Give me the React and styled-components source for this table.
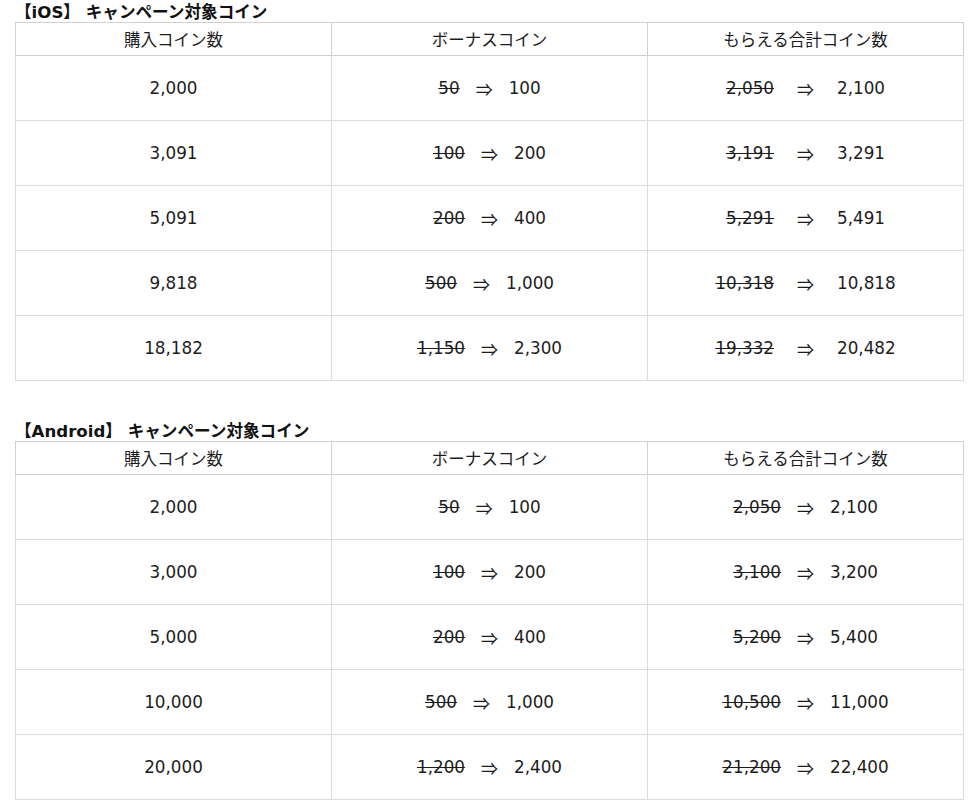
import React from "react";
import styled, { createGlobalStyle } from "styled-components";

const GlobalStyle = createGlobalStyle`
  body {
    margin: 0;
    background: #ffffff;
    font-family: "DejaVu Sans", "Noto Sans CJK JP", sans-serif;
    color: #1c1c1c;
  }
`;

const Page = styled.div`
  width: 949px;
  padding: 0 0 8px 15px;
`;

const Section = styled.section`
  margin-bottom: ${(p) => (p.last ? "0" : "38px")};
`;

const Title = styled.h3`
  margin: 0;
  height: 22px;
  line-height: 26px;
  font-size: 16.6px;
  font-weight: bold;
  color: #111;
  font-family: "DejaVu Sans", "Noto Sans CJK JP", sans-serif;
  white-space: pre;
`;

const Table = styled.table`
  width: 949px;
  border-collapse: collapse;
  table-layout: fixed;
  border: 1px solid #d0d0d0;
`;

const HeadCell = styled.th`
  height: 32px;
  padding: 0;
  font-weight: normal;
  font-size: 16.5px;
  color: #1c1c1c;
  border: 1px solid #d0d0d0;
  text-align: center;
  vertical-align: middle;
  font-family: "DejaVu Sans", "Noto Sans CJK JP", sans-serif;
`;

const Cell = styled.td`
  height: 64px;
  padding: 0;
  font-size: 16.8px;
  color: #1c1c1c;
  border: 1px solid #dcdcdc;
  text-align: center;
  vertical-align: middle;
`;

const Change = styled.span`
  display: inline-flex;
  align-items: center;
  gap: ${(p) => (p.wide ? "23px" : "16px")};
`;

const Old = styled.s`
  text-decoration-thickness: 1px;
  color: #1c1c1c;
`;

const Arrow = styled.span`
  font-family: "Noto Sans CJK JP", sans-serif;
  font-size: 17px;
  line-height: 1;
`;

const ios = [
  ["2,000", "50", "100", "2,050", "2,100"],
  ["3,091", "100", "200", "3,191", "3,291"],
  ["5,091", "200", "400", "5,291", "5,491"],
  ["9,818", "500", "1,000", "10,318", "10,818"],
  ["18,182", "1,150", "2,300", "19,332", "20,482"],
];

const android = [
  ["2,000", "50", "100", "2,050", "2,100"],
  ["3,000", "100", "200", "3,100", "3,200"],
  ["5,000", "200", "400", "5,200", "5,400"],
  ["10,000", "500", "1,000", "10,500", "11,000"],
  ["20,000", "1,200", "2,400", "21,200", "22,400"],
];

const Swap = ({ from, to, wide }) => (
  <Change wide={wide}>
    <Old>{from}</Old>
    <Arrow>⇒</Arrow>
    <span>{to}</span>
  </Change>
);

const CoinTable = ({ title, rows, wideTotal, last }) => (
  <Section last={last}>
    <Title>{title}</Title>
    <Table>
      <thead>
        <tr>
          <HeadCell>購入コイン数</HeadCell>
          <HeadCell>ボーナスコイン</HeadCell>
          <HeadCell>もらえる合計コイン数</HeadCell>
        </tr>
      </thead>
      <tbody>
        {rows.map((r) => (
          <tr key={r[0]}>
            <Cell>{r[0]}</Cell>
            <Cell>
              <Swap from={r[1]} to={r[2]} />
            </Cell>
            <Cell>
              <Swap from={r[3]} to={r[4]} wide={wideTotal} />
            </Cell>
          </tr>
        ))}
      </tbody>
    </Table>
  </Section>
);

export default function App() {
  return (
    <>
      <GlobalStyle />
      <Page>
        <CoinTable title="【iOS】 キャンペーン対象コイン" rows={ios} wideTotal />
        <CoinTable title="【Android】 キャンペーン対象コイン" rows={android} last />
      </Page>
    </>
  );
}
